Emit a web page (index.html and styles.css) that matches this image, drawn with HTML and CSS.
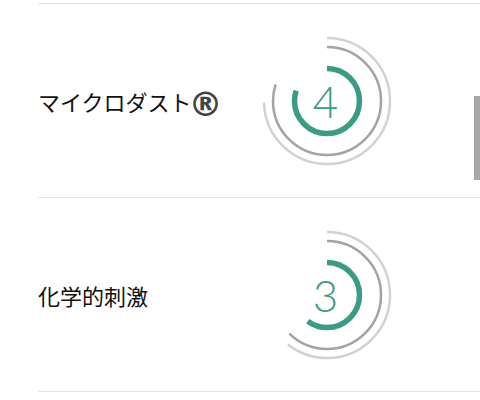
FILE: index.html
```html
<!DOCTYPE html>
<html lang="ja">
<head>
<meta charset="utf-8">
<link rel="stylesheet" href="styles.css">
</head>
<body>
<div class="list">
  <div class="row">
    <div class="label">マイクロダスト<span class="reg">®</span></div>
    <div class="gauge">
      <svg width="140" height="140" viewBox="0 0 140 140">
        <g transform="rotate(-90 70 70)">
          <circle class="ring-outer" cx="70" cy="70" r="63" style="stroke-dasharray:294.6 400"/>
          <circle class="ring-inner" cx="70" cy="70" r="54" style="stroke-dasharray:271 400"/>
          <circle class="ring-value" cx="70" cy="70" r="32.5" style="stroke-dasharray:163.4 300"/>
        </g>
      </svg>
      <span class="num">4</span>
    </div>
  </div>
  <div class="row">
    <div class="label">化学的刺激</div>
    <div class="gauge">
      <svg width="140" height="140" viewBox="0 0 140 140">
        <g transform="rotate(-90 70 70)">
          <circle class="ring-outer" cx="70" cy="70" r="63" style="stroke-dasharray:239.7 400"/>
          <circle class="ring-inner" cx="70" cy="70" r="54" style="stroke-dasharray:211 400"/>
          <circle class="ring-value" cx="70" cy="70" r="32.5" style="stroke-dasharray:122.5 300"/>
        </g>
      </svg>
      <span class="num">3</span>
    </div>
  </div>
  <div class="end"></div>
</div>
<div class="scrollbar"></div>
</body>
</html>
```
FILE: styles.css
```css
html, body {
  margin: 0;
  padding: 0;
  background: #ffffff;
  width: 480px;
  height: 400px;
  overflow: hidden;
}
body {
  font-family: "Noto Sans CJK JP", "Noto Sans", sans-serif;
  color: #111111;
}
.list {
  padding-top: 3px;
  padding-left: 38px;
}
.row {
  height: 193px;
  border-top: 1px solid #e4e4e4;
  display: grid;
  grid-template-columns: 219px 140px;
  align-items: center;
}
.end {
  border-top: 1px solid #e4e4e4;
}
.label {
  font-size: 22px;
  line-height: 1;
  letter-spacing: 0;
  display: flex;
  align-items: center;
}
.reg {
  font-family: "DejaVu Sans", sans-serif;
  color: #444;
  font-weight: 700;
  font-size: 34px;
  line-height: 1;
  margin-left: -3px;
  margin-top: 7px;
}
.gauge {
  position: relative;
  width: 140px;
  height: 140px;
}
.gauge svg {
  display: block;
}
.gauge circle {
  fill: none;
}
.ring-outer {
  stroke: #d2d2d2;
  stroke-width: 2.5;
}
.ring-inner {
  stroke: #a3a3a3;
  stroke-width: 2.5;
}
.ring-value {
  stroke: #3a9c83;
  stroke-width: 5.5;
}
.num {
  position: absolute;
  left: 0;
  top: 0;
  width: 140px;
  height: 140px;
  display: flex;
  align-items: center;
  justify-content: center;
  font-family: "Lato", "Roboto", sans-serif;
  font-weight: 300;
  font-size: 44px;
  color: #3a9c83;
  padding-right: 3px;
  box-sizing: border-box;
}
.scrollbar {
  position: absolute;
  left: 474px;
  top: 96px;
  width: 6px;
  height: 84px;
  background: #a8a8a8;
}
```
